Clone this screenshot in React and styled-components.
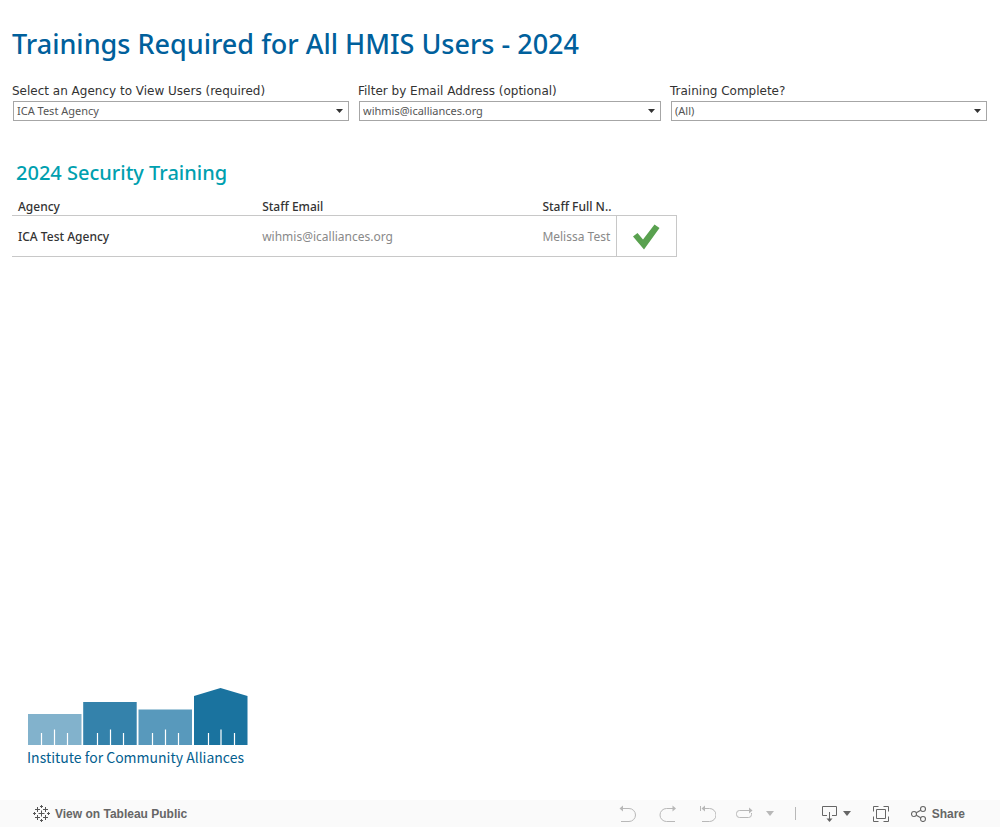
import React from "react";
import styled, { createGlobalStyle } from "styled-components";

const filters = [
  {
    id: "agency",
    label: "Select an Agency to View Users (required)",
    value: "ICA Test Agency",
  },
  {
    id: "email",
    label: "Filter by Email Address (optional)",
    value: "wihmis@icalliances.org",
  },
  { id: "complete", label: "Training Complete?", value: "(All)" },
];

const rows = [
  {
    agency: "ICA Test Agency",
    email: "wihmis@icalliances.org",
    name: "Melissa Test",
  },
];

const Caret = ({ width, height }) => (
  <svg width={width} height={height} viewBox="0 0 8 5" preserveAspectRatio="none" fill="currentColor" aria-hidden="true">
    <path d="M0 0h8L4 5z" />
  </svg>
);

const CheckMark = () => (
  <svg width="28" height="26" viewBox="0 0 28 26" role="img" aria-label="Complete">
    <path d="M1 12.5L5.5 9L11 15.5L22.5 0.5L27.5 4L12 25.5Z" fill="#59a14f" />
  </svg>
);

const Logo = () => (
  <svg width="222" height="82" viewBox="0 0 222 82" role="img" aria-label="Institute for Community Alliances">
    <path d="M1 27h53.500v31H1z" fill="#82b2cc" />
    <path d="M56.200 15h53.500v43H56.200z" fill="#3482ab" />
    <path d="M111.500 22.500h53.500v35.500h-53.500z" fill="#5899bc" />
    <path d="M167 9L193.500 1L220.500 9V58H167z" fill="#1a739f" />
    <path
      d="M14.500 46v12M27.500 42.500v15.500M40.500 46v12M70.500 46v12M83.500 42.500v15.500M96.500 46v12M125.500 46v12M138.500 42.500v15.500M151.500 46v12M181.500 46v12M194 42.500v15.500M207.500 46v12"
      stroke="#fff"
      strokeWidth="1.2"
    />
    <text x="0" y="76" fill="#04608f" fontSize="14" fontFamily="'Noto Sans CJK SC', sans-serif">
      Institute for Community Alliances
    </text>
  </svg>
);

const TableauIcon = () => (
  <svg width="17" height="17" viewBox="0 0 17 17" stroke="#555" fill="none" aria-hidden="true">
    <path d="M8.500 5.500v6M5.500 8.500h6M8.500 0v3M7 1.500h3M8.500 14v3M7 15.500h3M1.500 7v3M0 8.500h3M15.500 7v3M14 8.500h3M4.500 2v5M2 4.500h5M12.500 2v5M10 4.500h5M4.500 10v5M2 12.500h5M12.500 10v5M10 12.500h5" />
  </svg>
);

const UndoIcon = () => (
  <svg width="17" height="17" viewBox="0 0 17 17" aria-hidden="true">
    <path d="M2 3.500h8a6.500 6.500 0 0 1 0 13H2" stroke="currentColor" fill="none" />
    <path d="M0.500 3.500L4 0.500v6z" fill="currentColor" />
  </svg>
);

const RedoIcon = () => (
  <svg width="17" height="17" viewBox="0 0 17 17" aria-hidden="true">
    <path d="M15 3.500H7.500a6.500 6.500 0 0 0 0 13h8.500" stroke="currentColor" fill="none" />
    <path d="M17 3.500L13.500 0.500v6z" fill="currentColor" />
  </svg>
);

const RevertIcon = () => (
  <svg width="17" height="17" viewBox="0 0 17 17" aria-hidden="true">
    <path d="M1.500 1v5M4 3.500h6.500a6.500 6.500 0 0 1 0 13H3" stroke="currentColor" fill="none" />
    <path d="M2.500 3.500L6 0.500v6z" fill="currentColor" />
  </svg>
);

const RefreshIcon = () => (
  <svg width="17" height="17" viewBox="0 0 17 17" aria-hidden="true">
    <path
      d="M14 5.500H3.500a3 3 0 0 0-3 3v1a3 3 0 0 0 3 3h9a3 3 0 0 0 3-3V8"
      stroke="currentColor"
      fill="none"
    />
    <path d="M16.500 5.500L13 2.500v6z" fill="currentColor" />
  </svg>
);

const DownloadIcon = () => (
  <svg width="16" height="17" viewBox="0 0 16 17" aria-hidden="true">
    <path d="M5 10.500H0.500V1.500h14v9h-4.500M7.500 7v7.500" stroke="currentColor" fill="none" />
    <path d="M4.500 13.500h6l-3 3.500z" fill="currentColor" />
  </svg>
);

const FullScreenIcon = () => (
  <svg width="16" height="17" viewBox="0 0 16 17" stroke="currentColor" fill="none" aria-hidden="true">
    <path d="M3.500 4.500h9v9h-9zM0.500 6.500v-5h5M10.500 1.500h5v5M15.500 11.500v5h-5M5.500 16.500h-5v-5" />
  </svg>
);

const ShareIcon = () => (
  <svg width="16" height="17" viewBox="0 0 16 17" stroke="currentColor" fill="none" strokeWidth="1.1" aria-hidden="true">
    <circle cx="3" cy="9" r="2.500" />
    <circle cx="12" cy="4" r="2.500" />
    <circle cx="12" cy="14" r="2.500" />
    <path d="M5.300 7.700l4.400-2.400M5.300 10.300l4.400 2.400" />
  </svg>
);

const App = () => {
  return (
    <Page>
      <GlobalStyle />
      <Dashboard>
        <Title>Trainings Required for All HMIS Users - 2024</Title>
        <Filters>
          {filters.map(({ id, label, value }) => (
            <Filter key={id}>
              <FilterLabel htmlFor={id}>{label}</FilterLabel>
              <SelectBox>
                <Select id={id} defaultValue={value}>
                  <option>{value}</option>
                </Select>
                <Caret width={7} height={4} />
              </SelectBox>
            </Filter>
          ))}
        </Filters>
        <SheetTitle>2024 Security Training</SheetTitle>
        <Table>
          <colgroup>
            <Col $width="244px" />
            <Col $width="280px" />
            <Col $width="80px" />
            <Col $width="60px" />
          </colgroup>
          <thead>
            <tr>
              <HeadCell>Agency</HeadCell>
              <HeadCell>Staff Email</HeadCell>
              <HeadCell>Staff Full N..</HeadCell>
              <HeadCell />
            </tr>
          </thead>
          <tbody>
            {rows.map(({ agency, email, name }) => (
              <tr key={email}>
                <Cell $strong>{agency}</Cell>
                <Cell>{email}</Cell>
                <Cell>{name}</Cell>
                <StatusCell>
                  <CheckMark />
                </StatusCell>
              </tr>
            ))}
          </tbody>
        </Table>
      </Dashboard>
      <LogoRow>
        <Logo />
      </LogoRow>
      <Toolbar>
        <ToolbarLink href="#">
          <TableauIcon />
          View on Tableau Public
        </ToolbarLink>
        <Tools $gap="20px">
          <Tools $gap="23px">
            <ToolButton disabled aria-label="Undo">
              <UndoIcon />
            </ToolButton>
            <ToolButton disabled aria-label="Redo">
              <RedoIcon />
            </ToolButton>
            <ToolButton disabled aria-label="Revert">
              <RevertIcon />
            </ToolButton>
          </Tools>
          <ToolButton disabled $gap="13px" aria-label="Refresh">
            <RefreshIcon />
            <Caret width={8} height={5} />
          </ToolButton>
          <Divider />
          <Tools $gap="22px">
            <ToolButton $gap="5px" aria-label="Download">
              <DownloadIcon />
              <Caret width={8} height={5} />
            </ToolButton>
            <ToolButton aria-label="Full screen">
              <FullScreenIcon />
            </ToolButton>
            <ToolButton $gap="5px">
              <ShareIcon />
              Share
            </ToolButton>
          </Tools>
        </Tools>
      </Toolbar>
    </Page>
  );
};

const GlobalStyle = createGlobalStyle`
  * {
    box-sizing: border-box;
  }
  body {
    margin: 0;
    background: #fff;
    font-family: "Noto Sans", sans-serif;
  }
`;
const Page = styled.div`
  min-height: 100vh;
  display: flex;
  flex-direction: column;
`;
const Dashboard = styled.main`
  flex: 1;
  padding: 24px 13px 0 12px;
`;
const Title = styled.h1`
  margin: 0;
  color: #00609c;
  font-size: 27px;
  font-weight: 500;
  line-height: 40px;
`;
const Filters = styled.div`
  display: grid;
  grid-template-columns: 337fr 303fr 317fr;
  gap: 9px;
  margin-top: 19px;
`;
const Filter = styled.div`
  display: flex;
  flex-direction: column;
`;
const FilterLabel = styled.label`
  color: #333;
  font-family: "DejaVu Sans", sans-serif;
  font-size: 12px;
  line-height: 16px;
  margin-bottom: 2px;
`;
const SelectBox = styled.div`
  position: relative;
  margin-left: 1px;
  color: #333;
  svg {
    position: absolute;
    right: 6px;
    top: 8px;
    pointer-events: none;
  }
`;
const Select = styled.select`
  display: block;
  width: 100%;
  height: 20px;
  padding: 0 20px 1px 3px;
  appearance: none;
  border: 1px solid #a6a6a6;
  border-radius: 0;
  background: #fff;
  color: #555;
  font-family: "Noto Sans", sans-serif;
  font-size: 11px;
`;
const SheetTitle = styled.h2`
  margin: 38px 4px 0;
  color: #00a0af;
  font-size: 20px;
  font-weight: 500;
  line-height: 28px;
`;
const Table = styled.table`
  width: 665px;
  margin-top: 11px;
  table-layout: fixed;
  border-collapse: collapse;
  font-size: 12px;
  text-align: left;
`;
const Col = styled.col`
  width: ${({ $width }) => $width};
`;
const HeadCell = styled.th`
  height: 17px;
  padding: 2px 0 0 6px;
  border-bottom: 1px solid #c8c8c8;
  color: #333;
  font-weight: 500;
  line-height: 14px;
  white-space: nowrap;
`;
const Cell = styled.td`
  height: 41px;
  padding: 2px 0 0 6px;
  border-bottom: 1px solid #c8c8c8;
  color: ${({ $strong }) => ($strong ? "#333" : "#898989")};
  font-weight: ${({ $strong }) => ($strong ? 500 : 400)};
  white-space: nowrap;
`;
const StatusCell = styled(Cell)`
  padding: 2px 0 0;
  border: 1px solid #c8c8c8;
  svg {
    display: block;
    margin: 0 auto;
  }
`;
const LogoRow = styled.div`
  padding: 0 27px 31px;
  svg {
    display: block;
  }
`;
const Toolbar = styled.footer`
  display: flex;
  justify-content: space-between;
  align-items: center;
  height: 27px;
  padding: 0 35px 0 33px;
  background: #fafafa;
  color: #666;
  font-family: "Liberation Sans", sans-serif;
  font-size: 12px;
  font-weight: 700;
`;
const ToolbarLink = styled.a`
  display: flex;
  align-items: center;
  gap: 5px;
  color: inherit;
  text-decoration: none;
`;
const Tools = styled.div`
  display: flex;
  align-items: center;
  gap: ${({ $gap }) => $gap};
`;
const ToolButton = styled.button`
  display: flex;
  align-items: center;
  gap: ${({ $gap }) => $gap || 0};
  padding: 0;
  border: 0;
  background: none;
  color: #666;
  font: inherit;
  &:disabled {
    color: #b8b8b8;
  }
`;
const Divider = styled.span`
  width: 1px;
  height: 13px;
  margin: 0 6px 0 1px;
  background: #b8b8b8;
`;

export default App;
